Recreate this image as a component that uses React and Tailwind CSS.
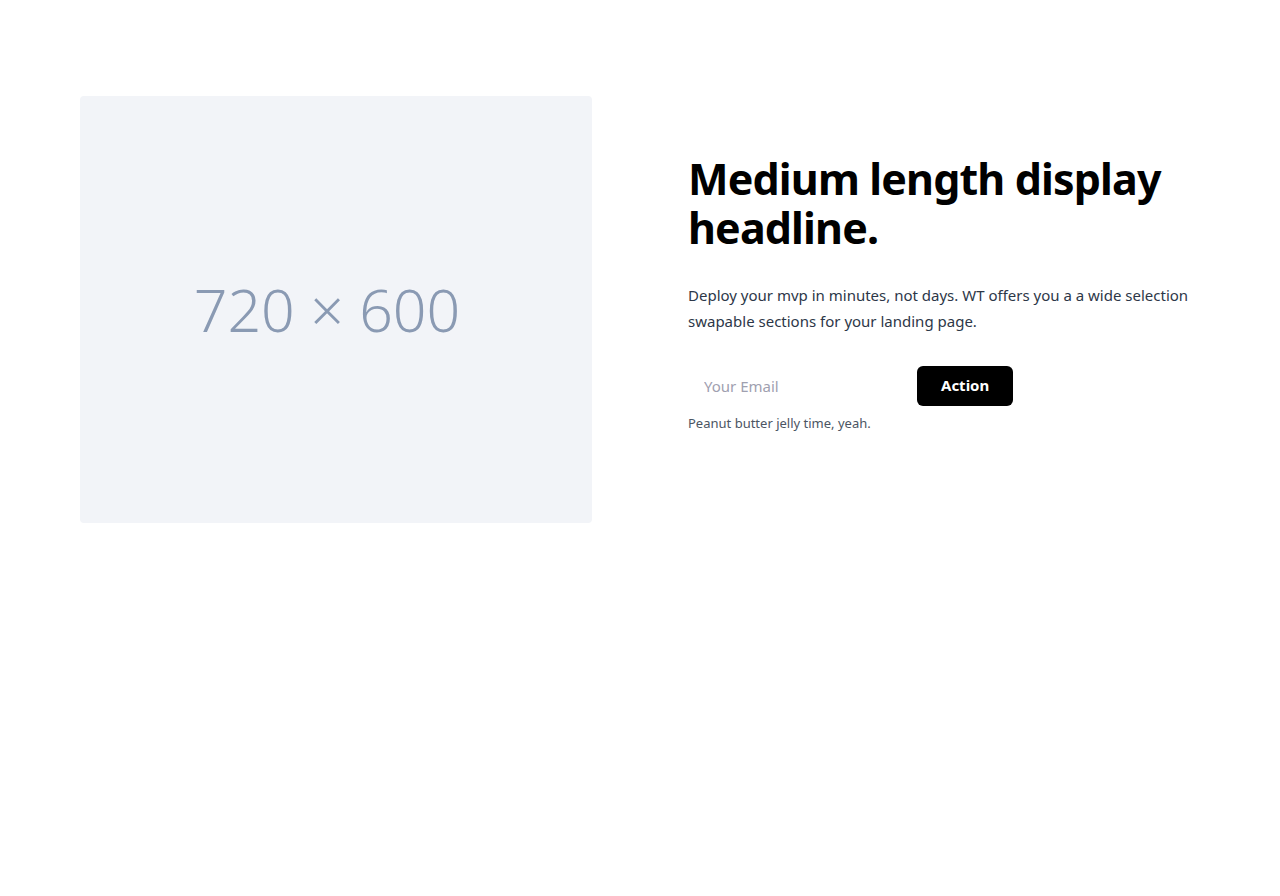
export default function App() {
  return (
    <div className="min-h-screen bg-white" style={{ fontFamily: '"Noto Sans", "Open Sans", sans-serif' }}>
      <section className="mx-auto max-w-7xl px-20 py-24">
        <div className="grid grid-cols-2 gap-24 items-center">
          {/* Placeholder image */}
          <div className="w-full aspect-[6/5] rounded bg-[#f2f4f8] flex items-center justify-center">
            <span className="mr-[18px] text-[59px] font-light text-[#8a9ab3]">720 × 600</span>
          </div>

          <div className="pb-8">
            <h1 className="text-[43px] font-bold leading-[49px] tracking-[-0.02em] text-black">
              Medium length display headline.
            </h1>
            <p className="mt-[30px] text-[15px] leading-[26px] text-[#2d3748]">
              Deploy your mvp in minutes, not days. WT offers you a a wide selection swapable sections for your landing page.
            </p>
            <form className="mt-8 flex items-center gap-2" onSubmit={e => e.preventDefault()}>
              <input
                type="email"
                placeholder="Your Email"
                className="w-[221px] h-10 px-4 text-[15px] bg-white outline-none placeholder:text-[#a0a0b0]"
              />
              <button type="submit" className="h-10 px-6 rounded-md bg-black text-white font-bold text-[15px]">
                Action
              </button>
            </form>
            <p className="mt-2 text-[13px] text-[#4b5563]">Peanut butter jelly time, yeah.</p>
          </div>
        </div>
      </section>
    </div>
  );
}
